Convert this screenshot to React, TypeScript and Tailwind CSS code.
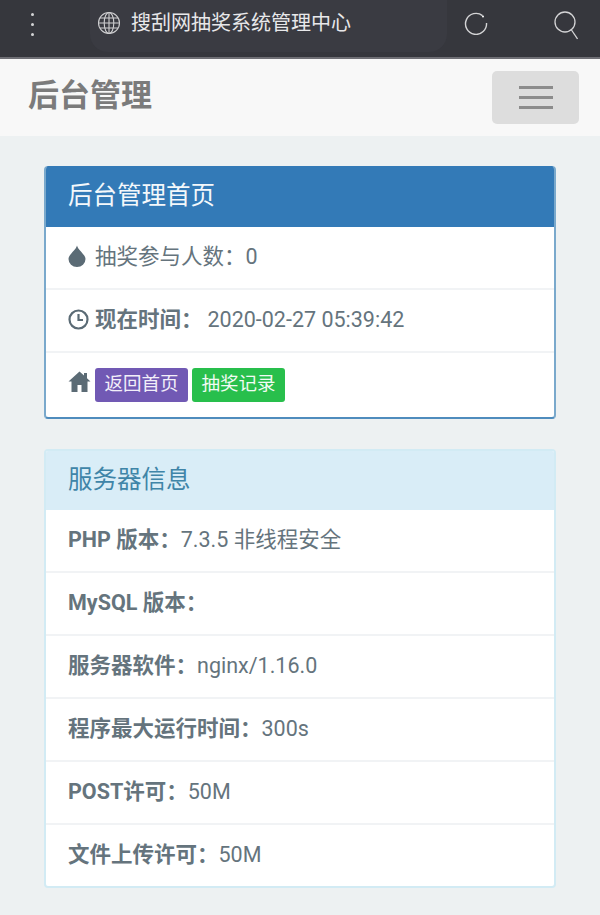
import React from "react";

const serverRows: [string, string][] = [
  ["PHP 版本：", "7.3.5 非线程安全"],
  ["MySQL 版本：", ""],
  ["服务器软件：", "nginx/1.16.0"],
  ["程序最大运行时间：", "300s"],
  ["POST许可：", "50M"],
  ["文件上传许可：", "50M"],
];

const Row: React.FC<{ children: React.ReactNode; last?: boolean }> = ({ children, last }) => (
  <div className={`flex items-center px-[22px] text-[21.5px] text-[#65747d] ${last ? "h-[61px]" : "h-[63px] border-b-2 border-[#f1f3f5]"}`}>
    {children}
  </div>
);

export default function App() {
  return (
    <div className="w-[600px] h-[915px] overflow-hidden bg-[#edf1f2] font-['Roboto','Noto_Sans_CJK_SC',sans-serif]">
      {/* Browser bar */}
      <div className="h-[59px] bg-[#36373d] border-b-2 border-[#6f6f75] flex items-start">
        <div className="w-[90px] pt-[13px] pr-[26px] flex flex-col items-center gap-[7px]">
          <span className="block w-[3px] h-[3px] rounded-full bg-[#d4d4d6]" />
          <span className="block w-[3px] h-[3px] rounded-full bg-[#d4d4d6]" />
          <span className="block w-[3px] h-[3px] rounded-full bg-[#d4d4d6]" />
        </div>
        <div className="w-[357px] h-[52px] bg-[#3a3b42] rounded-b-[18px] flex items-center pl-[7px] gap-[10px] pb-[7px]">
          <svg width="24" height="24" viewBox="0 0 24 24" fill="none" stroke="#cfcfd1" strokeWidth="1.1">
            <circle cx="12" cy="12" r="10.5" />
            <ellipse cx="12" cy="12" rx="4.8" ry="10.5" />
            <path d="M12 1.500v21M1.500 12h21M3 7h18M3 17h18" />
          </svg>
          <span className="text-[20px] text-[#e8e8ea] leading-none">搜刮网抽奖系统管理中心</span>
        </div>
        <div className="flex-1 flex items-start justify-between pl-[17px] pr-[22px] pt-[11px]">
          <svg width="24" height="24" viewBox="0 0 24 24" fill="none" stroke="#d4d4d6" strokeWidth="1.4">
            <path d="M18.500 4.600A10.500 10.500 0 1 0 22.500 12" />
            <circle cx="19" cy="5.600" r="1" fill="#ffffff" stroke="none" />
          </svg>
          <svg width="24" height="30" viewBox="0 0 24 30" fill="none" stroke="#d4d4d6" strokeWidth="1.300">
            <circle cx="11" cy="11" r="10" />
            <path d="M17.500 19l6 9" />
          </svg>
        </div>
      </div>

      {/* Navbar */}
      <div className="h-[77px] bg-[#f8f8f8] flex items-center justify-between pl-[28px] pr-[21px]">
        <span className="text-[31px] font-bold text-[#7b7b7b] leading-none -mt-[4px]">后台管理</span>
        <button className="w-[87px] h-[53px] bg-[#dddddd] rounded-[5px] flex flex-col items-center justify-center gap-[7px]">
          <span className="block w-[34px] h-[3px] bg-[#8c8c8c]" />
          <span className="block w-[34px] h-[3px] bg-[#8c8c8c]" />
          <span className="block w-[34px] h-[3px] bg-[#8c8c8c]" />
        </button>
      </div>

      <div className="px-[44px] pt-[30px]">
        {/* Home panel */}
        <div className="bg-white border-2 border-[#7aa9cc] border-b-[#4f8cbd] border-t-0 rounded-[4px] overflow-hidden">
          <div className="h-[61px] bg-[#337ab7] flex items-center px-[22px] text-[24.5px] text-[#f4f8fb]">后台管理首页</div>
          <Row>
            <svg width="18" height="22" viewBox="0 0 18 22" className="mr-[9px] -mt-[4px]" fill="#5b6b75">
              <path d="M9 0.500C10 5 17.500 9.500 17.500 14A8.500 8 0 0 1 0.500 14C0.500 9.500 8 5 9 0.500Z" />
            </svg>
            <span>抽奖参与人数：0</span>
          </Row>
          <Row>
            <svg width="21" height="21" viewBox="0 0 21 21" className="mr-[6px] -mt-[2px]" fill="none" stroke="#5b6b75" strokeWidth="2.200">
              <circle cx="10.500" cy="10.500" r="9" />
              <path d="M10.500 5v6h4.500" />
            </svg>
            <span className="font-bold">现在时间：</span>
            <span className="ml-[5px]">2020-02-27 05:39:42</span>
          </Row>
          <div className="h-[64px] flex items-center px-[22px]">
            <svg width="23" height="21" viewBox="0 0 23 21" className="mr-[4px] -mt-[8px]" fill="#5b6b75">
              <path d="M11.500 0.500L0.500 10.500h3V21h6v-7h4v7h6V10.500h3l-3.500-3.200V2h-3v2.600Z" />
            </svg>
            <span className="w-[93px] h-[34px] bg-[#7159b4] rounded-[3px] text-[#f2eff9] text-[18.5px] flex items-center justify-center">返回首页</span>
            <span className="w-[93px] h-[34px] bg-[#28bf4c] rounded-[3px] text-[#f2fbf4] text-[18.5px] flex items-center justify-center ml-[4px]">抽奖记录</span>
          </div>
        </div>

        {/* Server info panel */}
        <div className="mt-[30px] bg-white border-2 border-[#d2ebf4] rounded-[4px] overflow-hidden">
          <div className="h-[59px] bg-[#d9edf7] flex items-center px-[22px] text-[24.5px] text-[#3f85a8]">服务器信息</div>
          {serverRows.map(([label, value], i) => (
            <Row key={label} last={i === serverRows.length - 1}>
              <span className="font-bold">{label}</span>
              <span>{value}</span>
            </Row>
          ))}
        </div>
      </div>
    </div>
  );
}
